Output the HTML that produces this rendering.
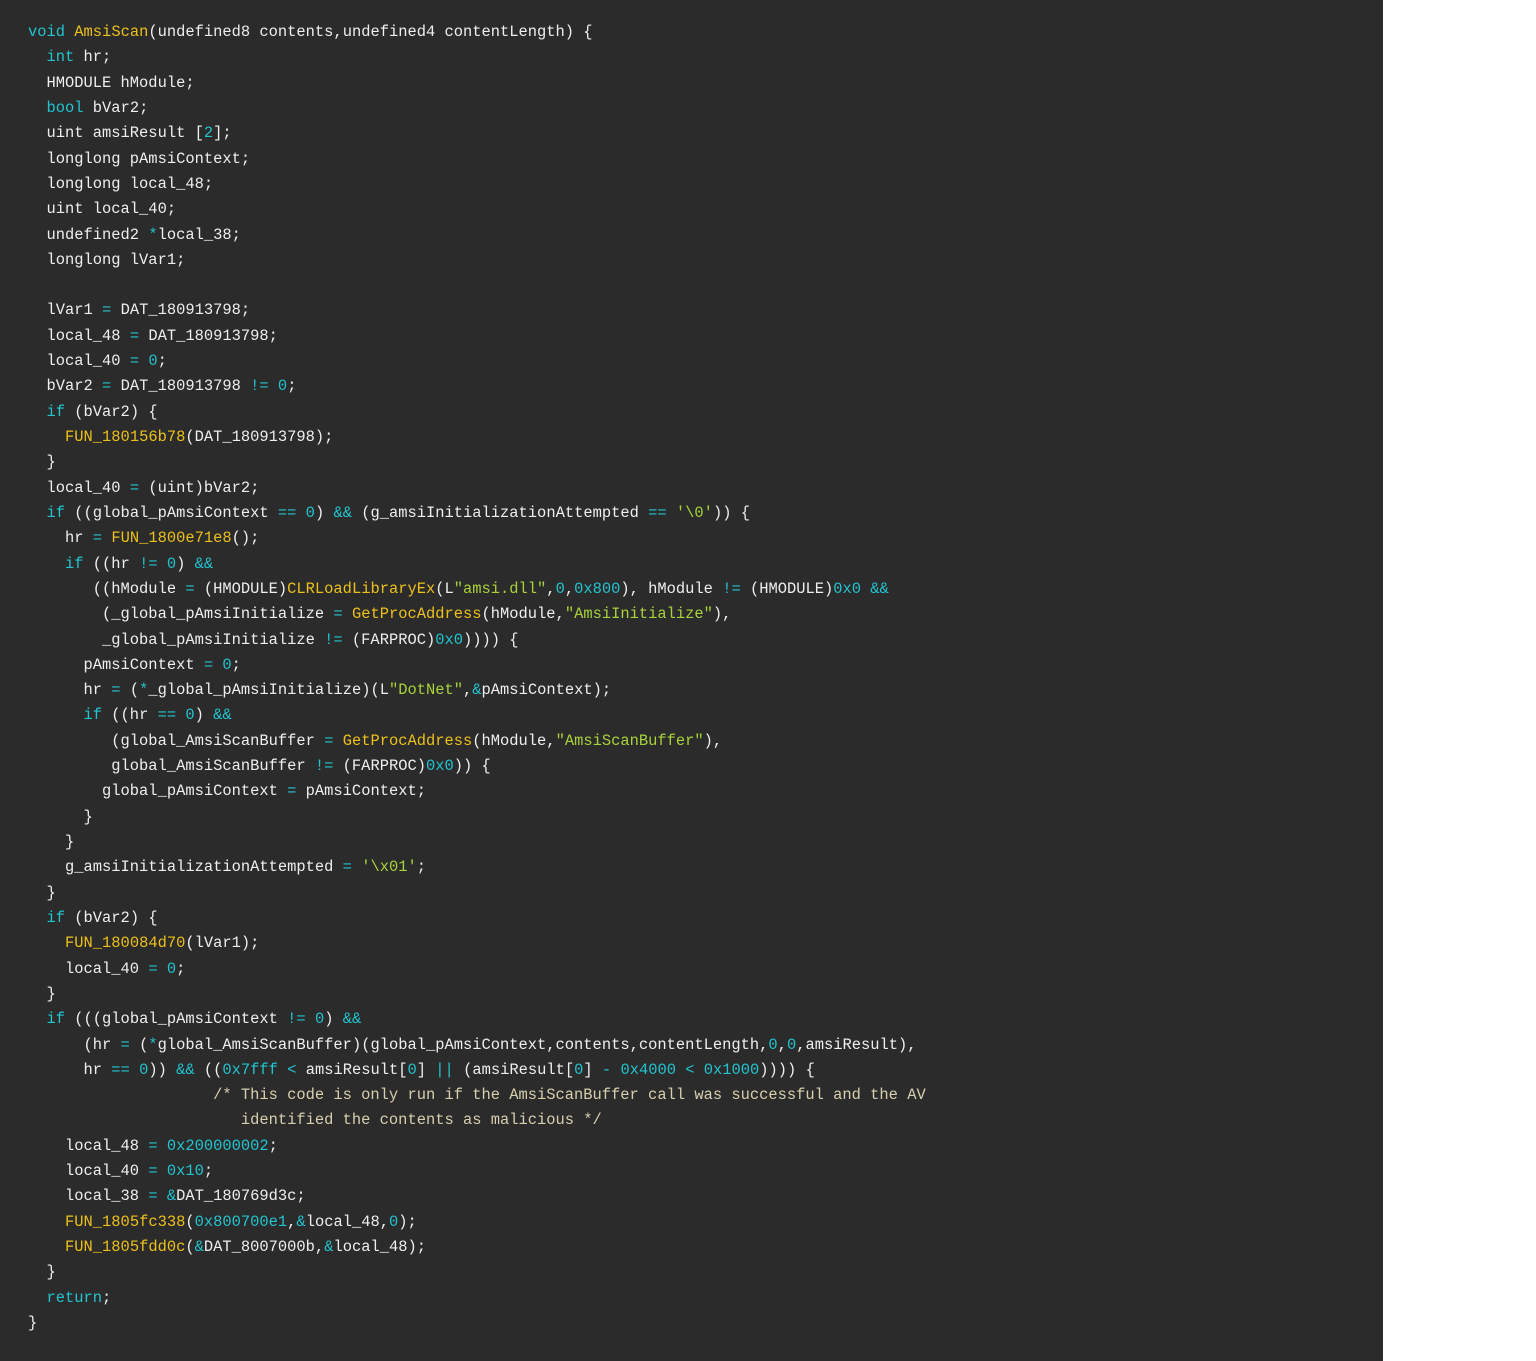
<!DOCTYPE html>
<html><head><meta charset="utf-8"><style>
html,body{margin:0;padding:0;background:#fff;}
#wrap{position:absolute;left:0;top:0;width:1383px;height:1361px;background:#2b2b2b;overflow:hidden;}
pre{margin:0;position:absolute;left:28px;top:20px;font-family:"Liberation Mono",monospace;font-size:15.43px;line-height:25.32px;color:#eeeeee;}
.k{color:#22c4cf}.f{color:#ecc01a}.s{color:#a8d23a}.c{color:#d6cfae}
</style></head><body><div id="wrap"><pre><span class="k">void</span> <span class="f">AmsiScan</span>(undefined8 contents,undefined4 contentLength) {
  <span class="k">int</span> hr;
  HMODULE hModule;
  <span class="k">bool</span> bVar2;
  uint amsiResult [<span class="k">2</span>];
  longlong pAmsiContext;
  longlong local_48;
  uint local_40;
  undefined2 <span class="k">*</span>local_38;
  longlong lVar1;

  lVar1 <span class="k">=</span> DAT_180913798;
  local_48 <span class="k">=</span> DAT_180913798;
  local_40 <span class="k">=</span> <span class="k">0</span>;
  bVar2 <span class="k">=</span> DAT_180913798 <span class="k">!=</span> <span class="k">0</span>;
  <span class="k">if</span> (bVar2) {
    <span class="f">FUN_180156b78</span>(DAT_180913798);
  }
  local_40 <span class="k">=</span> (uint)bVar2;
  <span class="k">if</span> ((global_pAmsiContext <span class="k">==</span> <span class="k">0</span>) <span class="k">&amp;&amp;</span> (g_amsiInitializationAttempted <span class="k">==</span> <span class="s">'\0'</span>)) {
    hr <span class="k">=</span> <span class="f">FUN_1800e71e8</span>();
    <span class="k">if</span> ((hr <span class="k">!=</span> <span class="k">0</span>) <span class="k">&amp;&amp;</span>
       ((hModule <span class="k">=</span> (HMODULE)<span class="f">CLRLoadLibraryEx</span>(L<span class="s">"amsi.dll"</span>,<span class="k">0</span>,<span class="k">0x800</span>), hModule <span class="k">!=</span> (HMODULE)<span class="k">0x0</span> <span class="k">&amp;&amp;</span>
        (_global_pAmsiInitialize <span class="k">=</span> <span class="f">GetProcAddress</span>(hModule,<span class="s">"AmsiInitialize"</span>),
        _global_pAmsiInitialize <span class="k">!=</span> (FARPROC)<span class="k">0x0</span>)))) {
      pAmsiContext <span class="k">=</span> <span class="k">0</span>;
      hr <span class="k">=</span> (<span class="k">*</span>_global_pAmsiInitialize)(L<span class="s">"DotNet"</span>,<span class="k">&amp;</span>pAmsiContext);
      <span class="k">if</span> ((hr <span class="k">==</span> <span class="k">0</span>) <span class="k">&amp;&amp;</span>
         (global_AmsiScanBuffer <span class="k">=</span> <span class="f">GetProcAddress</span>(hModule,<span class="s">"AmsiScanBuffer"</span>),
         global_AmsiScanBuffer <span class="k">!=</span> (FARPROC)<span class="k">0x0</span>)) {
        global_pAmsiContext <span class="k">=</span> pAmsiContext;
      }
    }
    g_amsiInitializationAttempted <span class="k">=</span> <span class="s">'\x01'</span>;
  }
  <span class="k">if</span> (bVar2) {
    <span class="f">FUN_180084d70</span>(lVar1);
    local_40 <span class="k">=</span> <span class="k">0</span>;
  }
  <span class="k">if</span> (((global_pAmsiContext <span class="k">!=</span> <span class="k">0</span>) <span class="k">&amp;&amp;</span>
      (hr <span class="k">=</span> (<span class="k">*</span>global_AmsiScanBuffer)(global_pAmsiContext,contents,contentLength,<span class="k">0</span>,<span class="k">0</span>,amsiResult),
      hr <span class="k">==</span> <span class="k">0</span>)) <span class="k">&amp;&amp;</span> ((<span class="k">0x7fff</span> <span class="k">&lt;</span> amsiResult[<span class="k">0</span>] <span class="k">||</span> (amsiResult[<span class="k">0</span>] <span class="k">-</span> <span class="k">0x4000</span> <span class="k">&lt;</span> <span class="k">0x1000</span>)))) {
                    <span class="c">/* This code is only run if the AmsiScanBuffer call was successful and the AV
                       identified the contents as malicious */</span>
    local_48 <span class="k">=</span> <span class="k">0x200000002</span>;
    local_40 <span class="k">=</span> <span class="k">0x10</span>;
    local_38 <span class="k">=</span> <span class="k">&amp;</span>DAT_180769d3c;
    <span class="f">FUN_1805fc338</span>(<span class="k">0x800700e1</span>,<span class="k">&amp;</span>local_48,<span class="k">0</span>);
    <span class="f">FUN_1805fdd0c</span>(<span class="k">&amp;</span>DAT_8007000b,<span class="k">&amp;</span>local_48);
  }
  <span class="k">return</span>;
}</pre></div></body></html>
